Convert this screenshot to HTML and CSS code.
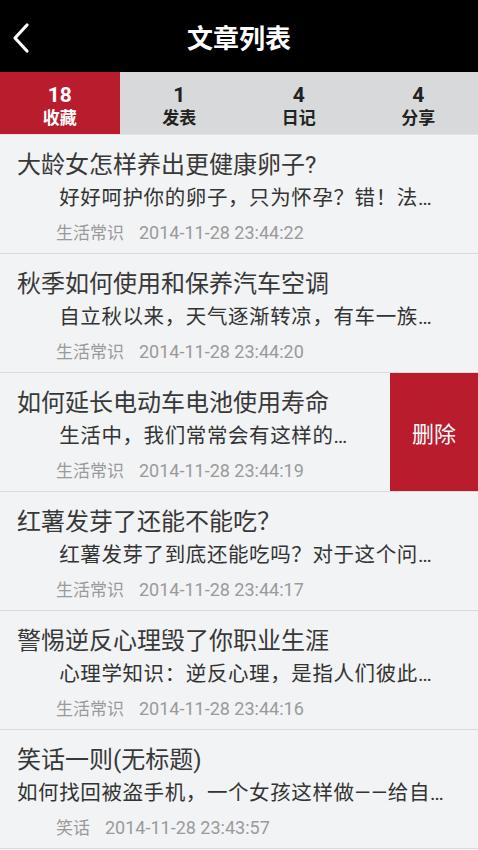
FILE: index.html
```html
<!DOCTYPE html>
<html lang="zh-CN">
<head>
    <meta charset="UTF-8">
    <meta name="viewport" content="width=device-width, initial-scale=1.0">
    <title>文章列表</title>
    <link rel="stylesheet" href="styles.css">
</head>
<body>
    <div id="app">
        <div class="top-bar">
            <button class="back-btn" aria-label="返回">
                <svg width="20" height="32" viewBox="0 0 20 32"><polyline points="16,3 4,16 16,29" fill="none" stroke="#fff" stroke-width="3.2" stroke-linecap="round" stroke-linejoin="round"/></svg>
            </button>
            <h1 class="page-title">文章列表</h1>
        </div>

        <div class="tabs">
            <div class="tab active"><span class="tab-num">18</span><span class="tab-name">收藏</span></div>
            <div class="tab"><span class="tab-num">1</span><span class="tab-name">发表</span></div>
            <div class="tab"><span class="tab-num">4</span><span class="tab-name">日记</span></div>
            <div class="tab"><span class="tab-num">4</span><span class="tab-name">分享</span></div>
        </div>

        <ul class="article-list">
            <li class="article">
                <div class="article-body">
                    <p class="article-title">大龄女怎样养出更健康卵子?</p>
                    <p class="article-summary">　　好好呵护你的卵子，只为怀孕？错！法…</p>
                    <p class="article-meta"><span class="cat">生活常识</span><span class="date">2014-11-28 23:44:22</span></p>
                </div>
            </li>
            <li class="article">
                <div class="article-body">
                    <p class="article-title">秋季如何使用和保养汽车空调</p>
                    <p class="article-summary">　　自立秋以来，天气逐渐转凉，有车一族…</p>
                    <p class="article-meta"><span class="cat">生活常识</span><span class="date">2014-11-28 23:44:20</span></p>
                </div>
            </li>
            <li class="article">
                <div class="article-body">
                    <p class="article-title">如何延长电动车电池使用寿命</p>
                    <p class="article-summary">　　生活中，我们常常会有这样的…</p>
                    <p class="article-meta"><span class="cat">生活常识</span><span class="date">2014-11-28 23:44:19</span></p>
                </div>
                <button class="delete-btn">删除</button>
            </li>
            <li class="article">
                <div class="article-body">
                    <p class="article-title">红薯发芽了还能不能吃？</p>
                    <p class="article-summary">　　红薯发芽了到底还能吃吗？对于这个问…</p>
                    <p class="article-meta"><span class="cat">生活常识</span><span class="date">2014-11-28 23:44:17</span></p>
                </div>
            </li>
            <li class="article">
                <div class="article-body">
                    <p class="article-title">警惕逆反心理毁了你职业生涯</p>
                    <p class="article-summary">　　心理学知识：逆反心理，是指人们彼此…</p>
                    <p class="article-meta"><span class="cat">生活常识</span><span class="date">2014-11-28 23:44:16</span></p>
                </div>
            </li>
            <li class="article">
                <div class="article-body">
                    <p class="article-title">笑话一则(无标题)</p>
                    <p class="article-summary">如何找回被盗手机，一个女孩这样做——给自…</p>
                    <p class="article-meta"><span class="cat">笑话</span><span class="date">2014-11-28 23:43:57</span></p>
                </div>
            </li>
        </ul>
    </div>
</body>
</html>
```

FILE: styles.css
```css
* {
    margin: 0;
    padding: 0;
    box-sizing: border-box;
}

body {
    font-family: Roboto, "Noto Sans CJK SC", sans-serif;
    background: #f2f3f5;
    color: #333;
    width: 478px;
    height: 850px;
    overflow: hidden;
}

.top-bar {
    height: 72px;
    background: #000;
    display: flex;
    align-items: center;
    justify-content: center;
    position: relative;
}

.back-btn {
    position: absolute;
    left: 11px;
    top: 22px;
    background: none;
    border: none;
    display: flex;
}

.page-title {
    color: #fff;
    font-size: 26px;
    font-weight: bold;
    margin-top: 0;
}

.tabs {
    display: grid;
    grid-template-columns: repeat(4, 1fr);
    height: 63px;
    background: #d8d9db;
    border-bottom: 1px solid #e2e3e5;
}

.tab {
    display: flex;
    flex-direction: column;
    align-items: center;
    justify-content: center;
    padding-top: 5px;
    color: #222;
    font-weight: bold;
}

.tab.active {
    background: #b81c2d;
    color: #fff;
}

.tab-num {
    font-size: 21px;
    line-height: 24px;
}

.tab-name {
    font-size: 17px;
    line-height: 22px;
}

.article-list {
    list-style: none;
}

.article {
    display: flex;
    border-bottom: 1px solid #dcdcde;
    height: 119px;
}

.article-body {
    flex: 1;
    min-width: 0;
    padding: 15px 17px 0;
}

.article-title {
    font-size: 24px;
    line-height: 30px;
    color: #383838;
    white-space: nowrap;
}

.article-summary {
    font-size: 20.5px;
    line-height: 28px;
    margin-top: 4px;
    letter-spacing: 0.6px;
    color: #333;
    white-space: nowrap;
    overflow: hidden;
}

.article-meta {
    font-size: 17px;
    line-height: 24px;
    margin-top: 9px;
    padding-left: 39px;
    color: #9a9a9a;
}

.article-meta .date {
    font-size: 18px;
    margin-left: 15px;
}

.delete-btn {
    width: 88px;
    border: none;
    background: #b81c2d;
    color: #fff;
    font-family: "Noto Sans CJK SC", sans-serif;
    font-size: 22px;
}
```
